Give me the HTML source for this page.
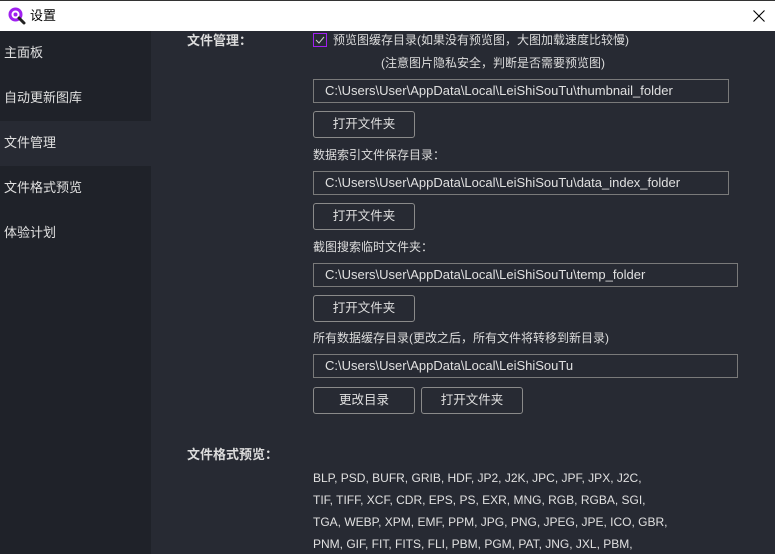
<!DOCTYPE html>
<html><head><meta charset="utf-8"><style>
*{margin:0;padding:0;box-sizing:border-box}
body{width:775px;height:554px;overflow:hidden;background:#272a33;font-family:"Liberation Sans","Noto Sans CJK SC",sans-serif;color:#dcdcdc;font-size:12px;position:relative}
.a{position:absolute;white-space:nowrap;line-height:16px}
#title{position:absolute;left:0;top:0;width:775px;height:31px;background:#fff;border-top:1px solid #333}
#side{position:absolute;left:0;top:31px;width:151px;height:523px;background:#1f2229}
.sel{position:absolute;left:0;top:90px;width:151px;height:45px;background:#272a33}
.side{font-size:13px;left:4px;color:#e0e0e0}
.inp{position:absolute;left:313px;height:24px;border:1px solid #7a7a7a;padding-left:11px;line-height:22px;font-size:13px;color:#e0e0e0}
.btn{position:absolute;width:102px;height:27px;border:1px solid #8a8a8a;border-radius:3px;text-align:center;line-height:25px;font-size:12.5px;color:#e0e0e0}
.fmt{left:313px;font-size:12px;color:#e0e0e0}
</style></head><body>
<div id="title">
<svg style="position:absolute;left:8px;top:6px" width="18" height="18" viewBox="0 0 18 18"><circle cx="7.5" cy="7.5" r="5.5" fill="none" stroke="#a020f0" stroke-width="3"/><circle cx="7.5" cy="7.5" r="2" fill="#a020f0"/><path d="M11 11 L16 16" stroke="#222" stroke-width="3" stroke-linecap="round"/></svg>
<div class="a" style="left:30px;top:7px;font-size:13px;color:#000">设置</div>
<svg style="position:absolute;left:753px;top:9px" width="12" height="12" viewBox="0 0 12 12"><path d="M0.5 0.5L11.5 11.5M11.5 0.5L0.5 11.5" stroke="#000" stroke-width="1.1"/></svg>
</div>
<div id="side"><div class="sel"></div></div>
<div class="a side" style="top:45px">主面板</div>
<div class="a side" style="top:90px">自动更新图库</div>
<div class="a side" style="top:135px">文件管理</div>
<div class="a side" style="top:180px">文件格式预览</div>
<div class="a side" style="top:225px">体验计划</div>

<div class="a" style="left:187px;top:33px;font-size:13px;font-weight:bold">文件管理：</div>
<div style="position:absolute;left:313px;top:33px;width:14px;height:14px;border:1px solid #a020f0"></div>
<svg style="position:absolute;left:315px;top:36px" width="10" height="8" viewBox="0 0 10 8"><path d="M1 4L4 7L9 1" fill="none" stroke="#ccc" stroke-width="1"/></svg>
<div class="a" style="left:333px;top:32px">预览图缓存目录(如果没有预览图，大图加载速度比较慢)</div>
<div class="a" style="left:381px;top:55px">(注意图片隐私安全，判断是否需要预览图)</div>
<div class="inp" style="top:79px;width:416px">C:\Users\User\AppData\Local\LeiShiSouTu\thumbnail_folder</div>
<div class="btn" style="left:313px;top:111px">打开文件夹</div>
<div class="a" style="left:313px;top:147px">数据索引文件保存目录：</div>
<div class="inp" style="top:171px;width:416px">C:\Users\User\AppData\Local\LeiShiSouTu\data_index_folder</div>
<div class="btn" style="left:313px;top:203px">打开文件夹</div>
<div class="a" style="left:313px;top:239px">截图搜索临时文件夹：</div>
<div class="inp" style="top:263px;width:425px">C:\Users\User\AppData\Local\LeiShiSouTu\temp_folder</div>
<div class="btn" style="left:313px;top:295px">打开文件夹</div>
<div class="a" style="left:313px;top:330px">所有数据缓存目录(更改之后，所有文件将转移到新目录)</div>
<div class="inp" style="top:354px;width:425px">C:\Users\User\AppData\Local\LeiShiSouTu</div>
<div class="btn" style="left:313px;top:387px">更改目录</div>
<div class="btn" style="left:421px;top:387px">打开文件夹</div>

<div class="a" style="left:187px;top:447px;font-size:13px;font-weight:bold">文件格式预览：</div>
<div class="a fmt" style="top:470px">BLP, PSD, BUFR, GRIB, HDF, JP2, J2K, JPC, JPF, JPX, J2C,</div>
<div class="a fmt" style="top:492px">TIF, TIFF, XCF, CDR, EPS, PS, EXR, MNG, RGB, RGBA, SGI,</div>
<div class="a fmt" style="top:514px">TGA, WEBP, XPM, EMF, PPM, JPG, PNG, JPEG, JPE, ICO, GBR,</div>
<div class="a fmt" style="top:536px">PNM, GIF, FIT, FITS, FLI, PBM, PGM, PAT, JNG, JXL, PBM,</div>
</body></html>
